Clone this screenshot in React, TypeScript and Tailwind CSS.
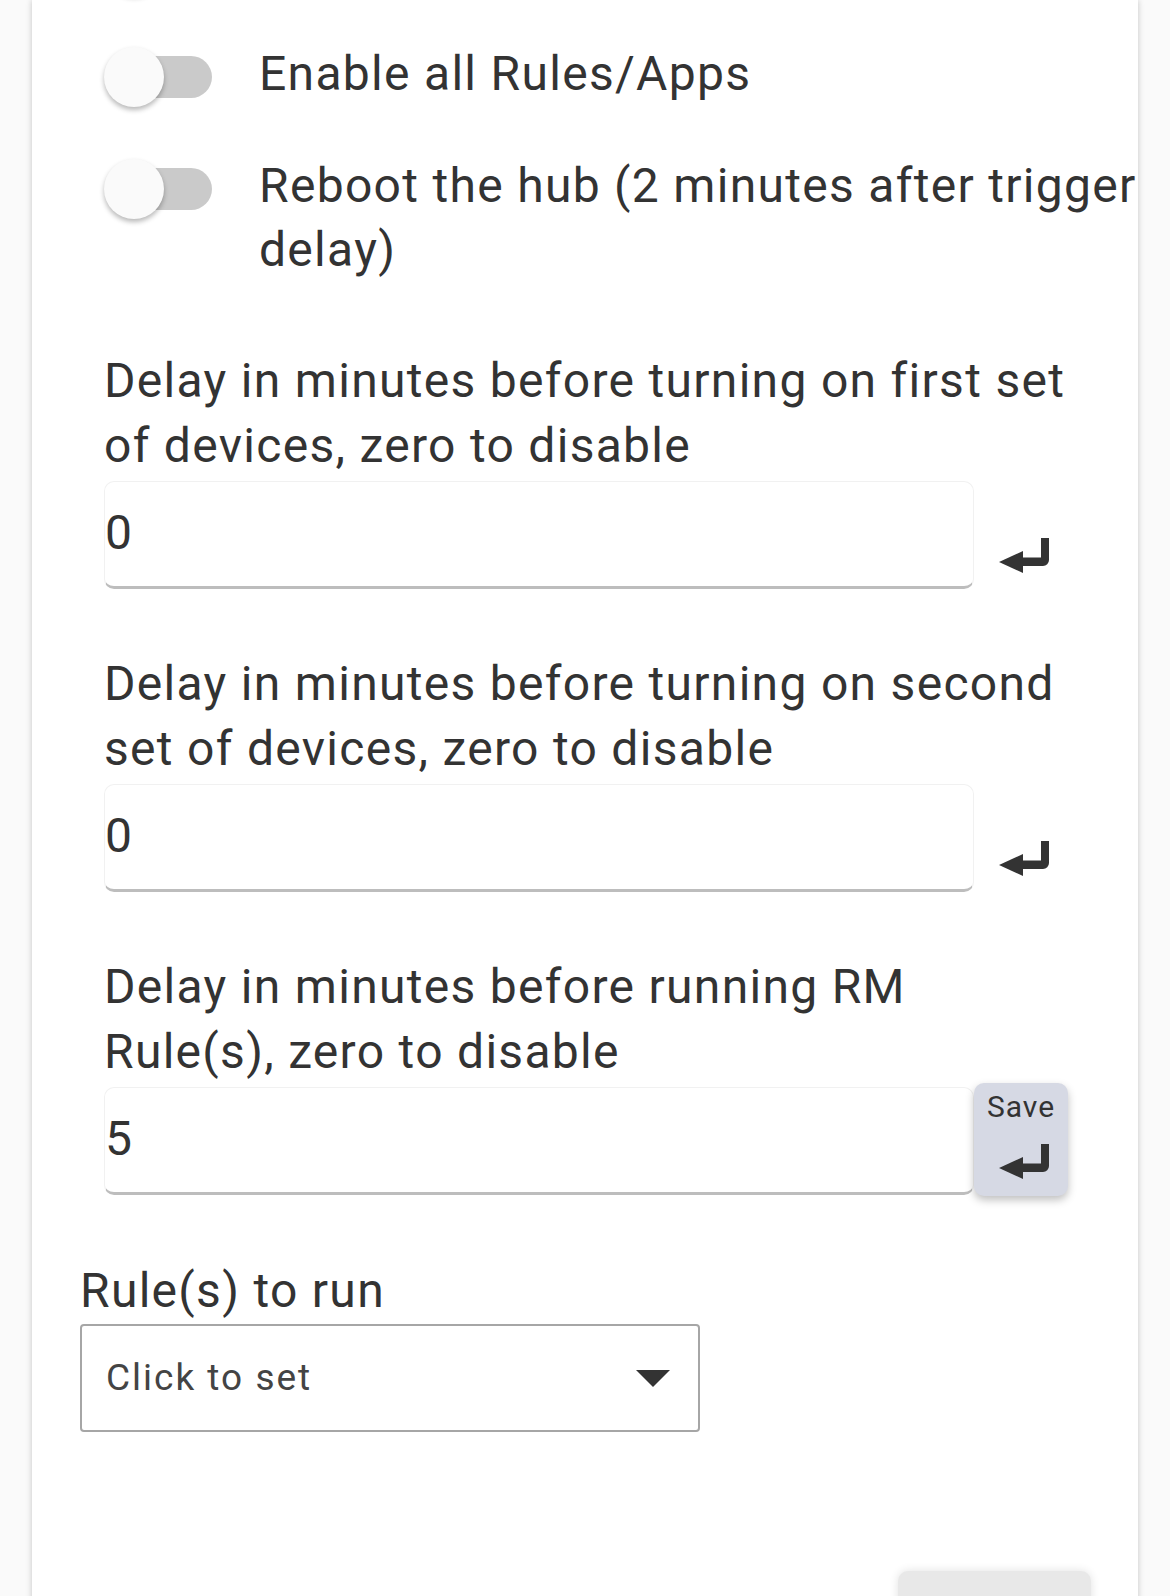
import React from "react";

function EnterIcon() {
  return (
    <svg width="51" height="35" viewBox="0 0 51 35" fill="#333">
      <path d="M42 0h8v22a6 6 0 0 1-6 6H23v-8.5h19z" />
      <path d="M0 24L24 13v22z" />
    </svg>
  );
}

function Toggle({ label }: { label: string }) {
  return (
    <div className="flex items-start">
      <div className="relative w-[108px] h-[60px] mt-[5px] shrink-0">
        <div className="absolute left-[6px] top-[9px] w-[102px] h-[42px] rounded-full bg-[#cacaca]" />
        <div className="absolute left-0 top-0 w-[60px] h-[60px] rounded-full bg-[#fafafa] shadow-[0_3px_5px_rgba(0,0,0,0.28)]" />
      </div>
      <div className="ml-[47px] flex-1 min-h-[64px] text-[48px] leading-[64px] tracking-[1.3px] text-[#333]">{label}</div>
    </div>
  );
}

function NumberField({
  label,
  value,
  dirty,
}: {
  label: string;
  value: string;
  dirty?: boolean;
}) {
  return (
    <div className="flex flex-col">
      <div className="w-[964px] text-[48px] leading-[65px] tracking-[1.3px] text-[#333] mb-[3px]">{label}</div>
      <div className="flex items-start">
        <div className="w-[870px] h-[108px] rounded-[10px] border border-[#f1f1f1] border-b-[3px] border-b-[#bdbdbd] pt-[19px] text-[48px] leading-[64px] text-[#333]">
          {value}
        </div>
        <button
          className={
            dirty
              ? "w-[94px] h-[113px] -mt-[4px] rounded-[10px] bg-[#d6d9e4] shadow-[0_4px_8px_rgba(0,0,0,0.25)] flex flex-col items-center"
              : "w-[94px] h-[113px] -mt-[4px] rounded-[10px] flex flex-col items-center"
          }
        >
          <span
            className={
              dirty
                ? "pt-[6px] text-[30px] leading-[36px] tracking-[1px] text-[#333]"
                : "pt-[6px] text-[30px] leading-[36px] tracking-[1px] text-[#333] invisible"
            }
          >
            Save
          </span>
          <span className="mt-[19px] ml-[6px]">
            <EnterIcon />
          </span>
        </button>
      </div>
    </div>
  );
}

export default function App() {
  return (
    <div
      className="min-h-screen bg-[#fafafa] overflow-hidden"
      style={{ fontFamily: "Roboto, 'Liberation Sans', sans-serif" }}
    >
      <div className="ml-[32px] w-[1106px] min-h-[1596px] bg-white shadow-[0_0_6px_rgba(0,0,0,0.22)] flex flex-col">
        <div className="flex flex-col gap-[47px] -mt-[70px] pl-[72px]">
          <Toggle label="" />
          <Toggle label="Enable all Rules/Apps" />
          <Toggle label="Reboot the hub (2 minutes after trigger delay)" />
        </div>

        <div className="flex flex-col gap-[61px] mt-[66px] pl-[72px]">
          <NumberField label="Delay in minutes before turning on first set of devices, zero to disable" value="0" />
          <NumberField label="Delay in minutes before turning on second set of devices, zero to disable" value="0" />
          <NumberField label="Delay in minutes before running RM Rule(s), zero to disable" value="5" dirty />
        </div>

        <div className="mt-[63px] pl-[48px] flex flex-col">
          <div className="text-[48px] leading-[64px] tracking-[1.3px] text-[#333]">Rule(s) to run</div>
          <div className="mt-[1px] w-[620px] h-[108px] rounded-[4px] border-2 border-[#a6a6a6] flex items-center justify-between pl-[24px] pr-[28px]">
            <span className="text-[37px] tracking-[2px] text-[#444]">Click to set</span>
            <svg width="34" height="17" viewBox="0 0 34 17">
              <path d="M0 0h34L17 17z" fill="#333" />
            </svg>
          </div>
        </div>

        <div className="mt-[139px] self-end mr-[47px] w-[193px] h-[60px] rounded-t-[10px] bg-[#e8e8e8] shadow-[0_0_10px_rgba(0,0,0,0.12)]" />
      </div>
    </div>
  );
}
